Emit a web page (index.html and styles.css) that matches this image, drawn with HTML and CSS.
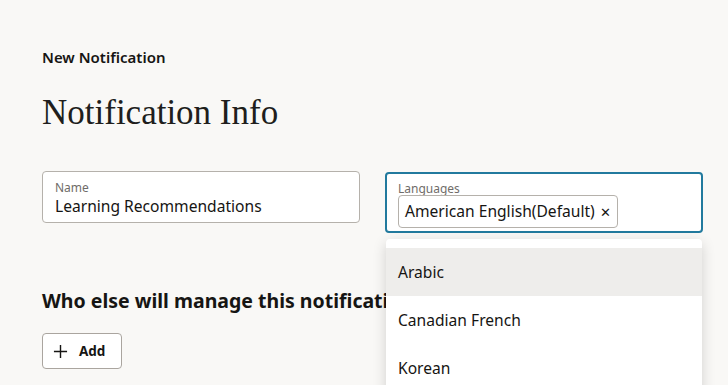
FILE: index.html
```html
<!DOCTYPE html>
<html lang="en">
<head>
  <meta charset="UTF-8" />
  <title>New Notification</title>
  <meta name="viewport" content="width=device-width, initial-scale=1" />
  <link rel="stylesheet" href="styles.css">
</head>
<body>
  <div class="page">
    <div class="crumb">New Notification</div>
    <h1>Notification Info</h1>

    <div class="fields">
      <div class="field">
        <label>Name</label>
        <div class="value">Learning Recommendations</div>
      </div>
      <div class="field-wrap">
        <div class="field focused">
          <label>Languages</label>
          <div class="chips">
            <span class="chip">American English(Default) <span class="x">&#x2715;</span></span>
          </div>
        </div>
        <ul class="dropdown">
          <li class="active">Arabic</li>
          <li>Canadian French</li>
          <li>Korean</li>
          <li>Spanish</li>
        </ul>
      </div>
    </div>

    <h2>Who else will manage this notification?</h2>
    <button class="btn">
      <svg width="15" height="15" viewBox="0 0 16 16"><path d="M8 1v14M1 8h14" stroke="#161513" stroke-width="1.5" fill="none"/></svg>
      Add
    </button>
    <h2 class="sub">Who should be notified?</h2>
  </div>
</body>
</html>
```

FILE: styles.css
```css
body {
  margin: 0;
  background: #f9f8f6;
  font-family: "Noto Sans", "Open Sans", sans-serif;
  color: #161513;
  overflow: hidden;
  height: 385px;
}
.page {
  padding: 46px 0 0 42px;
}
.crumb {
  font-size: 15px;
  font-weight: 600;
  line-height: 22px;
}
h1 {
  font-family: "Liberation Serif", "DejaVu Serif", serif;
  font-weight: normal;
  font-size: 35px;
  line-height: 40px;
  margin: 25px 0 0 0;
  color: #201e1c;
}
.fields {
  display: flex;
  gap: 25px;
  margin-top: 38px;
  align-items: flex-start;
}
.field {
  flex-shrink: 0;
  width: 318px;
  box-sizing: border-box;
  height: 52px;
  background: #fff;
  border: 1px solid #b5b1ab;
  border-radius: 4px;
  padding: 9px 12px 0 12px;
}
.field label {
  display: block;
  font-size: 12px;
  line-height: 14px;
  color: #6f6c68;
}
.field .value {
  font-size: 15.6px;
  line-height: 22px;
}
.field-wrap {
  position: relative;
  flex-shrink: 0;
  margin-top: 1px;
}
.field.focused {
  height: 61px;
  border: 2px solid #227a9e;
  padding: 8px 11px 0 11px;
}
.chips {
  display: flex;
  margin-top: -1px;
}
.chip {
  border: 1px solid #b5b1ab;
  border-radius: 4px;
  font-size: 15.6px;
  line-height: 30px;
  padding: 0 6px 0 6px;
}
.chip .x {
  font-size: 13px;
  margin-left: 1px;
}
.dropdown {
  position: absolute;
  top: 67px;
  left: 1px;
  width: 316px;
  margin: 0;
  padding: 9px 0 0 0;
  list-style: none;
  background: #fff;
  border-radius: 4px;
  box-shadow: 0 4px 14px rgba(0, 0, 0, 0.16);
}
.dropdown li {
  height: 48px;
  line-height: 48px;
  padding: 0 12px;
  font-size: 15.6px;
}
.dropdown li.active {
  background: #eeedeb;
}
h2 {
  font-size: 19.5px;
  font-weight: 700;
  line-height: 24px;
  margin: 56px 0 0 0;
}
.btn {
  display: flex;
  align-items: center;
  gap: 11px;
  margin-top: 20px;
  height: 36px;
  padding: 0 16px 0 10px;
  background: #fff;
  border: 1px solid #aaa59f;
  border-radius: 4px;
  font-family: inherit;
  font-size: 13.5px;
  font-weight: 700;
  color: #161513;
}
h2.sub {
  margin-top: 14px;
  font-size: 16px;
  line-height: 20px;
}
```
